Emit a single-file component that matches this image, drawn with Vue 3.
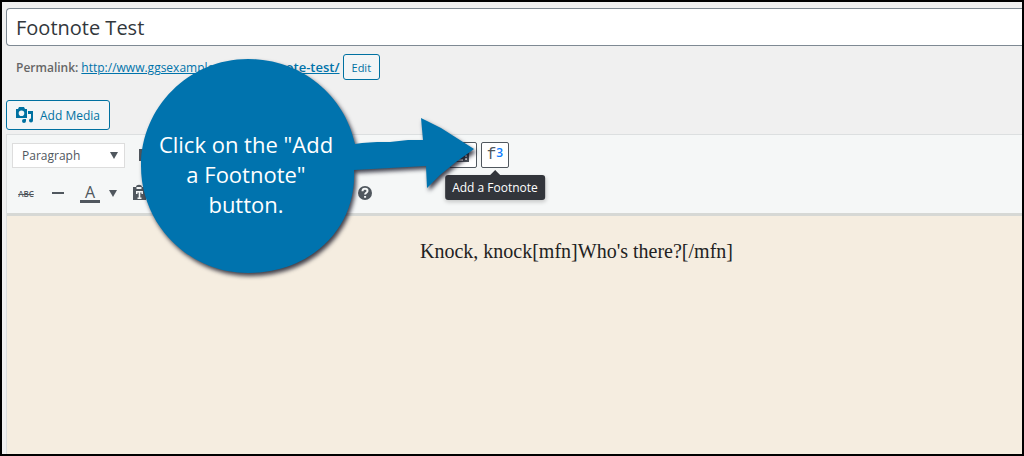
<script setup>
import { ref } from 'vue'

const title = ref('Footnote Test')
const format = ref('Paragraph')
</script>

<template>
  <main class="screen">
    <input v-model="title" class="title" type="text" aria-label="Title" />

    <div class="permalink">
      <strong>Permalink:</strong>
      <a href="#">http://www.ggsexamples.com/<b>footnote-test/</b></a>
      <button class="edit" type="button">Edit</button>
    </div>

    <button class="media" type="button">
      <svg width="18" height="18" viewBox="0 0 18 18" aria-hidden="true">
        <path fill-rule="evenodd" d="M0 3h2l1-2h5l1 2h2v9H0zM5.500 4.500a2.800 2.800 0 1 0 0 5.600 2.800 2.800 0 0 0 0-5.600z" />
        <path d="M12 5h5v9.500a2 2 0 1 1-2-2V8h-3zM8 13a2 2 0 1 0 2 2v-2z" />
      </svg>
      Add Media
    </button>

    <section class="editor">
      <div class="toolbar">
        <div class="row">
          <div class="format">
            <select v-model="format" aria-label="Format">
              <option>Paragraph</option>
            </select>
            <svg class="caret" width="8" height="7" viewBox="0 0 8 7" aria-hidden="true"><path d="M0 0h8L4 7z" /></svg>
          </div>
          <button class="tool bold" type="button" aria-label="Bold">
            <svg width="20" height="20" viewBox="0 0 20 20" aria-hidden="true">
              <path fill-rule="evenodd" d="M4 4h7c5 0 5 5 2 6 4 1 3 6-2 6H4zM8 6v3h3c2 0 2-3 0-3zM8 11v3h3c2 0 2-3 0-3z" />
            </svg>
          </button>
          <button class="tool outlined toggle" type="button" aria-label="Toolbar Toggle">
            <svg width="20" height="20" viewBox="0 0 20 20" aria-hidden="true">
              <path fill-rule="evenodd" d="M2 2h14v5H2zM2 8h14v9H2zM4 10v2h2v-2zM8 10v2h2v-2zM12 10v2h2v-2zM4 14v2h6v-2zM12 13v2h2v-2z" />
            </svg>
          </button>
          <div class="note">
            <button class="tool outlined" type="button" aria-describedby="tip">
              <span class="f">f</span><span class="three">3</span>
            </button>
            <div id="tip" class="tip" role="tooltip">Add a Footnote</div>
          </div>
        </div>
        <div class="row second">
          <button class="tool strike" type="button">ABC</button>
          <button class="tool" type="button" aria-label="Horizontal line">
            <svg width="20" height="20" viewBox="0 0 20 20" aria-hidden="true"><path d="M4 9h12v2H4z" /></svg>
          </button>
          <button class="tool color" type="button"><span>A</span></button>
          <button class="tool drop" type="button" aria-label="Text color menu">
            <svg width="8" height="7" viewBox="0 0 8 7" aria-hidden="true"><path d="M0 0h8L4 7z" /></svg>
          </button>
          <button class="tool" type="button" aria-label="Paste as text">
            <svg width="20" height="20" viewBox="0 0 20 20" aria-hidden="true">
              <path fill-rule="evenodd" d="M4 4h3c0-3 6-3 6 0h4v13H4zM7.500 4v2h5V4zM7 8v3h1.500V9.500h1.200V14.500H8.500V16h4v-1.500h-1.200v-5h1.200V11H14V8z" />
            </svg>
          </button>
          <button class="tool help" type="button" aria-label="Keyboard Shortcuts">
            <svg width="20" height="20" viewBox="0 0 20 20" aria-hidden="true">
              <circle cx="10" cy="10" r="7" />
              <path class="mark" d="M7.500 8.200c0-3.200 5-3 5-.2 0 1.800-2.400 1.800-2.400 3.600M10.100 13v1.800" />
            </svg>
          </button>
        </div>
      </div>
      <div class="content" contenteditable="true" role="textbox" aria-label="Content">Knock, knock[mfn]Who's there?[/mfn]</div>
    </section>

    <aside class="callout">
      <svg class="shape" width="350" height="230" viewBox="0 0 350 230" aria-hidden="true">
        <path d="M215 86L222 85 237 84 250 84 268 82 283 82 281 60 301 70 334 91 316 104 300 117 287 130 286 108 250 110 214 112C217 168 173 215 108 215C49 215 1 167 1 108C1 49 49 1 108 1C162 1 205 38 215 86z" />
      </svg>
      <p>Click on the "Add<br />a Footnote"<br />button.</p>
    </aside>
  </main>
</template>

<style>
body {
  margin: 0;
}
</style>

<style scoped>
* {
  box-sizing: border-box;
}
.screen {
  position: relative;
  display: flex;
  flex-direction: column;
  min-height: 100vh;
  padding: 6px 0 0 4px;
  border: 2px solid #000;
  overflow: hidden;
  background: #f0f0f0;
  font-family: "Open Sans", "Noto Sans", sans-serif;
  font-size: 12px;
  color: #32373c;
}
button,
select,
input {
  margin: 0;
  font-family: inherit;
  color: inherit;
}
button {
  cursor: pointer;
}
svg {
  display: block;
  fill: currentColor;
}
.title {
  width: 100%;
  height: 38px;
  padding: 0 9px;
  border: 1px solid #7e8993;
  border-right: 0;
  border-radius: 4px 0 0 4px;
  background: #fff;
  font-size: 20px;
  outline: 0;
}
.permalink {
  display: flex;
  align-items: center;
  gap: 3px;
  height: 26px;
  margin: 8px 0 0 10px;
  color: #666;
}
.permalink strong {
  font-weight: 600;
}
.permalink a {
  color: #0073aa;
}
.permalink b {
  font-size: 13px;
  font-weight: 600;
}
.edit {
  height: 26px;
  padding: 0 8px;
  border: 1px solid #0071a1;
  border-radius: 3px;
  background: #f3f5f6;
  color: #0071a1;
  font-size: 11px;
}
.media {
  display: flex;
  align-items: center;
  align-self: flex-start;
  gap: 6px;
  height: 30px;
  margin-top: 20px;
  padding: 0 9px;
  border: 1px solid #0071a1;
  border-radius: 3px;
  background: #f3f5f6;
  color: #0071a1;
  font-size: 12px;
}
.editor {
  display: flex;
  flex: 1;
  flex-direction: column;
  margin-top: 4px;
  border: 1px solid #dcdfe0;
  border-width: 1px 0 0 1px;
}
.toolbar {
  padding: 6px 5px;
  border-bottom: 3px solid #d6d8d5;
  background: #f5f7f7;
  color: #50575e;
}
.row {
  display: flex;
  align-items: center;
  height: 28px;
}
.second {
  margin-top: 10px;
}
.format {
  position: relative;
  width: 113px;
}
.format select {
  width: 100%;
  height: 25px;
  padding: 0 9px;
  border: 1px solid #ddd;
  border-radius: 0;
  background: #fff;
  font-size: 12px;
  appearance: none;
}
.caret {
  position: absolute;
  top: 9px;
  right: 7px;
  pointer-events: none;
}
.tool {
  display: flex;
  flex: none;
  align-items: center;
  justify-content: center;
  width: 28px;
  height: 26px;
  padding: 0;
  border: 0;
  background: none;
}
.outlined {
  border: 1px solid #50575e;
  border-radius: 2px;
  background: #fff;
}
.bold {
  margin-left: 6px;
}
.toggle {
  margin-left: 290px;
}
.note {
  position: relative;
  margin-left: 4px;
}
.f {
  font-family: "Liberation Mono", monospace;
  font-size: 16px;
}
.three {
  margin-bottom: 6px;
  color: #0a7cff;
  font-size: 12px;
  font-weight: 600;
}
.tip {
  position: absolute;
  top: 33px;
  left: 50%;
  padding: 0 7px;
  border-radius: 3px;
  background: #32353b;
  color: #fff;
  font-size: 12px;
  line-height: 25px;
  white-space: nowrap;
  transform: translateX(-50%);
  box-shadow: 0 2px 4px #0003;
}
.tip::before {
  content: "";
  position: absolute;
  top: -5px;
  left: 50%;
  margin-left: -5px;
  border: 5px solid transparent;
  border-top: 0;
  border-bottom-color: #32353b;
}
.strike {
  font-size: 8px;
  font-weight: 600;
  text-decoration: line-through;
}
.second .tool + .tool {
  margin-left: 4px;
}
.color span {
  width: 20px;
  border-bottom: 3px solid #50575e;
  font-size: 16px;
  line-height: 16px;
}
.second .tool + .drop {
  width: 16px;
  margin-left: 1px;
}
.second .tool + .help {
  margin-left: 198px;
}
.mark {
  fill: none;
  stroke: #f5f7f7;
  stroke-width: 2;
}
.content {
  flex: 1;
  padding: 21px 0 21px 124px;
  background: #f5ede0;
  color: #222;
  font-family: "Liberation Serif", serif;
  font-size: 20px;
  line-height: 28px;
  text-align: center;
  outline: 0;
}
.callout {
  position: absolute;
  top: 56px;
  left: 138px;
  width: 350px;
  height: 230px;
  color: #fff;
  pointer-events: none;
}
.shape {
  position: absolute;
  inset: 0;
  fill: #0073ae;
  filter: drop-shadow(2px 3px 2px #112c);
}
.callout p {
  position: relative;
  width: 212px;
  margin: 0;
  padding-top: 71px;
  font-size: 22px;
  line-height: 30px;
  text-align: center;
}
</style>
